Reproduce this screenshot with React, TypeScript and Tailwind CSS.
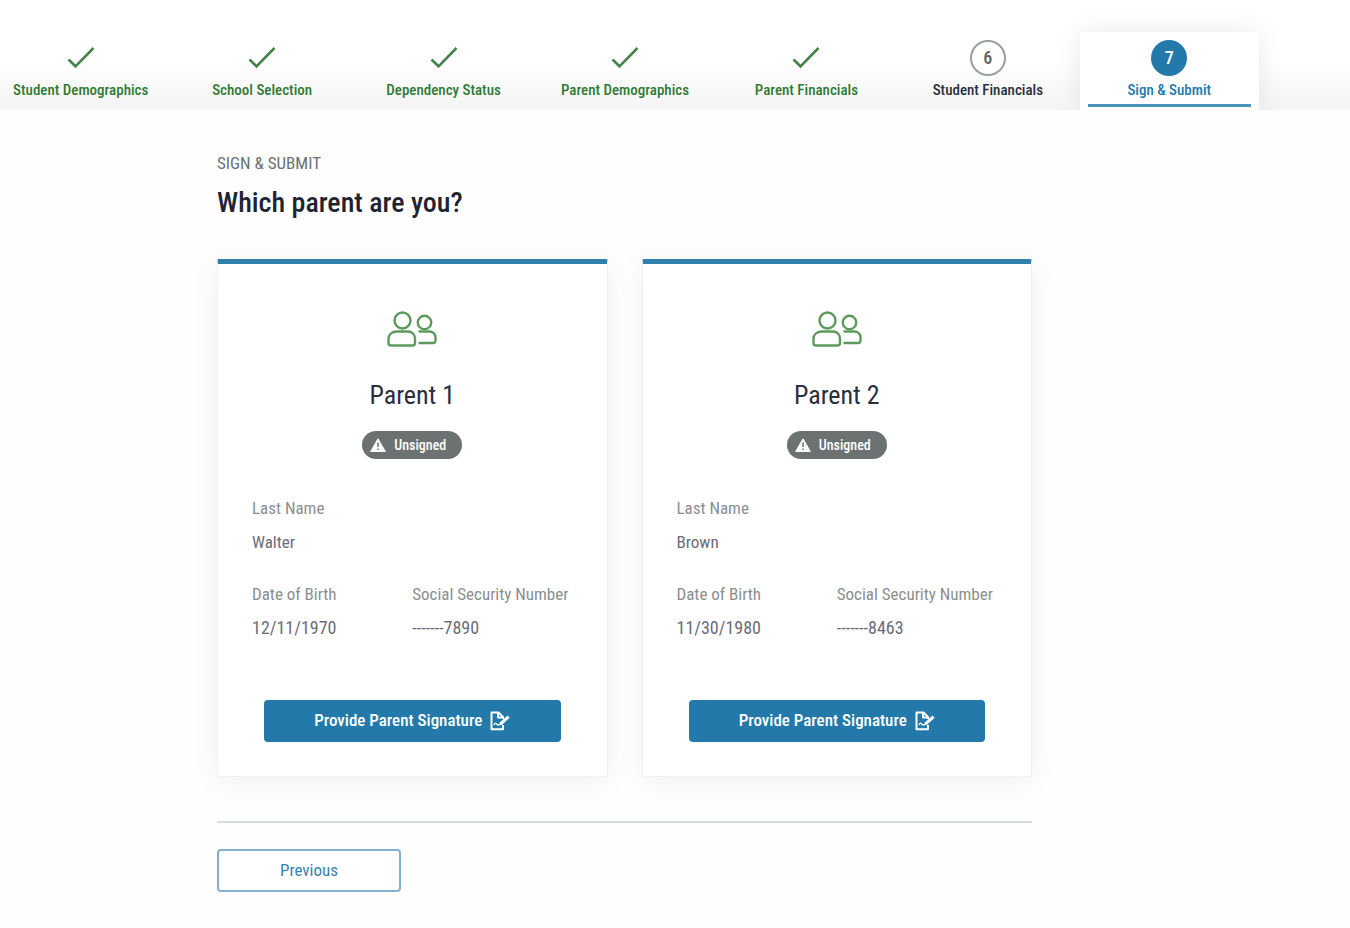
const steps = [
    { label: 'Student Demographics', status: 'done' },
    { label: 'School Selection', status: 'done' },
    { label: 'Dependency Status', status: 'done' },
    { label: 'Parent Demographics', status: 'done' },
    { label: 'Parent Financials', status: 'done' },
    { label: 'Student Financials', status: 'todo' },
    { label: 'Sign & Submit', status: 'current' },
];

const parents = [
    { title: 'Parent 1', lastName: 'Walter', birth: '12/11/1970', ssn: '-------7890' },
    { title: 'Parent 2', lastName: 'Brown', birth: '11/30/1980', ssn: '-------8463' },
];

function CheckIcon() {
    return (
        <svg className="h-8 w-8" viewBox="0 0 32 32" fill="none" stroke="#47824a" strokeWidth="2.6" aria-hidden="true">
            <path d="M3.500 17.500l7 6.800L28.500 6" />
        </svg>
    );
}

function ParentsIcon() {
    return (
        <svg className="h-9 w-[50px]" viewBox="0 0 50 36" fill="none" stroke="#5c9a5c" strokeWidth="2.4" aria-hidden="true">
            <circle cx="15.500" cy="9.500" r="8" />
            <path d="M10 20.500h11c4 0 7 3 7 7v4.500a2.500 2.500 0 0 1-2.500 2.500H4a2.500 2.500 0 0 1-2.500-2.500v-4c0-4.500 3.500-7.500 8.500-7.500z" />
            <circle cx="37.500" cy="11.500" r="6.700" />
            <path d="M31.500 20.500H42c4 0 6.500 2.500 6.500 6v3a2.500 2.500 0 0 1-2.500 2.500H31.500" />
        </svg>
    );
}

function WarningIcon() {
    return (
        <svg className="h-[14px] w-4" viewBox="0 0 16 14" aria-hidden="true">
            <path d="M8 0.800L15.300 13.400H0.700z" fill="#fff" stroke="#fff" strokeLinejoin="round" />
            <path d="M8 4.500v4.500M8 10.500v1.500" stroke="#6b7271" strokeWidth="1.500" />
        </svg>
    );
}

function SignatureIcon() {
    return (
        <svg className="h-5 w-5" viewBox="0 0 20 20" fill="none" stroke="#fff" strokeWidth="2" strokeLinejoin="round" aria-hidden="true">
            <path d="M13 14v4.200H1.500V1.500H8.500L13 6v2" />
            <path d="M8 1.500v5h5" />
            <path d="M4 14c1-2.500 2-2.500 3-.5l2 .5" strokeWidth="1.300" />
            <path d="M9 14.500l.8-3L17.500 4.500l2.200 2.200-7.700 7z" fill="#fff" stroke="none" />
        </svg>
    );
}

function Steps() {
    return (
        <nav className="overflow-hidden bg-[linear-gradient(to_bottom,#ffffff_55%,#f4f4f4)] pt-8">
            <ol className="-ml-[10px] mr-[90px] grid grid-cols-7">
                {steps.map((step, index) => (
                    <li key={step.label} className={step.status === 'current' ? 'mx-px bg-white px-2 shadow-[0_0_24px_rgba(0,0,0,0.09)]' : 'mx-px px-2'}>
                        <a
                            href="#"
                            aria-current={step.status === 'current' ? 'step' : undefined}
                            className={`flex h-[78px] flex-col items-center whitespace-nowrap pt-2 text-[15px] leading-5 ${
                                step.status === 'done' ? 'text-[#2f7a34]' : step.status === 'current' ? 'text-[#2379a9]' : 'text-[#2b2f3c]'
                            }`}
                        >
                            {step.status === 'done' && (
                                <span className="flex h-9 w-9 items-center justify-center">
                                    <CheckIcon />
                                </span>
                            )}
                            {step.status === 'todo' && (
                                <span className="flex h-9 w-9 items-center justify-center rounded-full border-2 border-[#9a9e9e] bg-white text-lg font-medium text-[#5d6364]">
                                    {index + 1}
                                </span>
                            )}
                            {step.status === 'current' && (
                                <span className="flex h-9 w-9 items-center justify-center rounded-full bg-[#2379a9] text-lg font-medium text-white">
                                    {index + 1}
                                </span>
                            )}
                            <span className="mt-1 font-medium">{step.label}</span>
                            {step.status === 'current' && <span className="mt-1 h-[3px] w-full shrink-0 bg-[#4a93ba]" />}
                        </a>
                    </li>
                ))}
            </ol>
        </nav>
    );
}

function ParentCard({ parent }: { parent: (typeof parents)[number] }) {
    return (
        <section className="flex flex-col rounded-xs border border-t-5 border-[#f0f0f0] border-t-[#2f80ab] bg-white px-[34px] pb-[34px] pt-[47px] shadow-[0_4px_28px_rgba(0,0,0,0.06)]">
            <div className="flex flex-col items-center">
                <ParentsIcon />
                <h2 className="mt-8 text-[26px] leading-8 text-[#2b2f3c]">{parent.title}</h2>
                <span className="mt-5 flex h-7 items-center gap-2 rounded-full bg-[#6b7271] px-2 pr-4 text-sm font-medium text-white">
                    <WarningIcon />
                    Unsigned
                </span>
            </div>
            <dl className="mt-[37px] grid grid-cols-2 text-[17px] leading-6">
                <div className="col-span-2">
                    <dt className="text-[#8a8f8e]">Last Name</dt>
                    <dd className="mt-[10px] text-[#6a6d78]">{parent.lastName}</dd>
                </div>
                <div className="mt-7">
                    <dt className="text-[#8a8f8e]">Date of Birth</dt>
                    <dd className="mt-[10px] text-lg leading-6 text-[#6a6d78]">{parent.birth}</dd>
                </div>
                <div className="mt-7">
                    <dt className="whitespace-nowrap text-[#8a8f8e]">Social Security Number</dt>
                    <dd className="mt-[10px] text-lg leading-6 text-[#6a6d78]">{parent.ssn}</dd>
                </div>
            </dl>
            <button className="mx-3 mt-[60px] flex h-[42px] items-center justify-center gap-2 rounded-sm bg-[#2379a9] text-[17px] font-medium text-white">
                Provide Parent Signature
                <SignatureIcon />
            </button>
        </section>
    );
}

export default function App() {
    return (
        <div className="min-h-screen bg-[#fefefe] font-['Roboto_Condensed',Roboto,sans-serif]">
            <Steps />
            <main className="ml-[217px] mr-4 max-w-[815px] pb-9 pt-[41px]">
                <p className="text-[17px] leading-6 text-[#6b7271]">SIGN &amp; SUBMIT</p>
                <h1 className="mt-2 text-[28px] font-medium leading-10 text-[#1f2433]">Which parent are you?</h1>
                <div className="mt-9 grid grid-cols-2 gap-[34px]">
                    {parents.map((parent) => (
                        <ParentCard key={parent.title} parent={parent} />
                    ))}
                </div>
                <hr className="mt-11 border-t-2 border-[#d8dcdb]" />
                <button className="mt-[26px] h-[43px] w-[184px] rounded-sm border-2 border-[#7fb2ce] bg-white text-[17px] text-[#3a83ab]">
                    Previous
                </button>
            </main>
        </div>
    );
}
